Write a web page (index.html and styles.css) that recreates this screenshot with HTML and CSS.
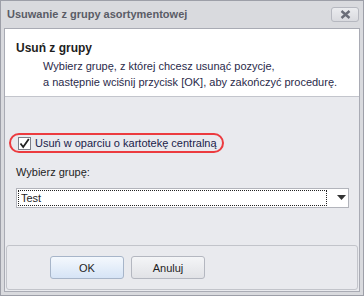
FILE: index.html
```html
<!DOCTYPE html>
<html lang="pl">
<head>
    <meta charset="UTF-8">
    <title>Usuwanie z grupy asortymentowej</title>
    <link rel="stylesheet" href="styles.css">
</head>
<body>

<div class="window">
    <div class="titlebar">
        <span class="title">Usuwanie z grupy asortymentowej</span>
        <span class="close-btn">
            <svg width="11" height="9" viewBox="0 0 11 9"><path d="M1.5 1 L9.5 8 M9.5 1 L1.5 8" stroke="#6a6d78" stroke-width="2.4"/></svg>
        </span>
    </div>

    <div class="client">
        <div class="header">
            <div class="header-title">Usuń z grupy</div>
            <div class="header-desc">
                Wybierz grupę, z której chcesz usunąć pozycje,<br>
                a następnie wciśnij przycisk [OK], aby zakończyć procedurę.
            </div>
        </div>

        <div class="body">
            <div class="check-row">
                <span class="mark">
                    <span class="checkbox">
                        <svg width="11" height="11" viewBox="0 0 11 11"><path d="M1.5 5.5 L4.2 9 L9.8 1" fill="none" stroke="#222" stroke-width="1.8"/></svg>
                    </span>
                    <span class="check-label">Usuń w oparciu o kartotekę centralną</span>
                </span>
            </div>

            <div class="field-label">Wybierz grupę:</div>
            <div class="combo">
                <span class="combo-value">Test</span>
                <span class="combo-arrow">
                    <svg width="9" height="6" viewBox="0 0 9 6"><path d="M0 0 H9 L4.5 5 Z" fill="#333"/></svg>
                </span>
            </div>

            <div class="footer">
                <button class="btn btn-default">OK</button>
                <button class="btn">Anuluj</button>
            </div>
        </div>
    </div>
</div>

</body>
</html>
```

FILE: styles.css
```css
body {
    margin: 0;
    font-family: "Liberation Sans", Arial, sans-serif;
    font-size: 11px;
    color: #1e1e1e;
}
.window {
    width: 364px;
    height: 296px;
    box-sizing: border-box;
    border: 1px solid #9d9fa8;
    background: #d9dade;
    padding: 0 3px 3px 3px;
    display: flex;
    flex-direction: column;
}
.titlebar {
    height: 27px;
    display: flex;
    align-items: center;
    justify-content: space-between;
    padding: 0 1px 0 3px;
}
.title {
    font-weight: bold;
    font-size: 11px;
    color: #5a5c66;
    margin-top: -1px;
}
.close-btn {
    width: 26px;
    height: 13px;
    border: 1px solid #b6b8c0;
    border-radius: 3px;
    background: linear-gradient(#ebecef, #d9dadf);
    display: flex;
    align-items: center;
    justify-content: center;
    margin-top: -1px;
}
.client {
    flex: 1;
    border: 1px solid #a9abb4;
    display: flex;
    flex-direction: column;
}
.header {
    background: #fff;
    height: 68px;
    border-bottom: 1px solid #c3c5cc;
    padding: 12px 0 0 11px;
    box-sizing: border-box;
    white-space: nowrap;
}
.header-title {
    font-weight: bold;
    font-size: 12px;
    margin-bottom: 3px;
}
.header-desc {
    padding-left: 27px;
    line-height: 16px;
    color: #2a2a4a;
}
.body {
    flex: 1;
    background: #e9eaee;
    display: flex;
    flex-direction: column;
    padding: 36px 10px 1px 11px;
}
.check-row {
    margin-left: -7px;
    height: 20px;
    display: flex;
}
.mark {
    display: flex;
    align-items: center;
    gap: 4px;
    border: 2px solid #ec3b3f;
    border-radius: 10px;
    padding: 0 5px 0 7px;
}
.checkbox {
    width: 11px;
    height: 11px;
    border: 1px solid #7d7f88;
    background: #fff;
    display: flex;
}
.check-label {
    color: #20224a;
}
.field-label {
    margin-top: 13px;
}
.combo {
    margin-top: 10px;
    height: 20px;
    border: 1px solid #b2b4bb;
    background: #fff;
    display: flex;
    align-items: center;
    padding: 1px;
    box-sizing: border-box;
}
.combo-value {
    flex: 1;
    height: 16px;
    border: 1px dotted #222;
    padding-left: 2px;
    line-height: 15px;
    box-sizing: border-box;
    margin-right: 8px;
}
.combo-arrow {
    width: 12px;
    display: flex;
    justify-content: center;
}
.footer {
    margin: auto -9px 0 -10px;
    height: 45px;
    border: 1px solid #c2c4ca;
    border-radius: 3px;
    display: flex;
    align-items: center;
    gap: 7px;
    padding: 0 0 0 43px;
    box-sizing: border-box;
}
.btn {
    width: 74px;
    height: 23px;
    border: 1px solid #b4b7c0;
    border-radius: 3px;
    background: linear-gradient(#f4f5f7, #e1e2e6);
    font-family: "Liberation Sans", Arial, sans-serif;
    font-size: 11px;
    color: #1e1e1e;
    padding: 0;
}
.btn-default {
    background: linear-gradient(#f4f8fd, #d6e4f6);
    border-color: #a7b5c9;
}
```
